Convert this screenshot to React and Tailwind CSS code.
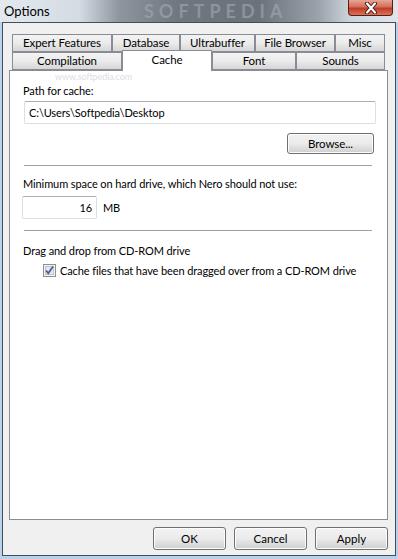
import React from 'react';

const font = { fontFamily: 'Lato, "Noto Sans", sans-serif' };

const Tab = ({ label, w, selected }) => (
  <div
    className={`flex items-center justify-center border border-[#898c95] text-[11.5px] tracking-[-0.1px] text-black ${
      selected
        ? 'relative z-10 h-[21px] -mb-px border-b-0 bg-white pb-[2px]'
        : 'h-[18px] bg-gradient-to-b from-[#f3f3f3] via-[#ebebeb] to-[#d6d6d6]'
    } ${w}`}
  >
    {label}
  </div>
);

const Button = ({ children, w }) => (
  <button
    className={`${w} flex items-center justify-center rounded-[3px] border border-[#707070] bg-gradient-to-b from-[#f2f2f2] via-[#ebebeb] to-[#cfcfcf] text-[11.5px] text-black shadow-[inset_0_0_0_1px_#fcfcfc]`}
  >
    {children}
  </button>
);

const Checkbox = () => (
  <svg width="13" height="13" viewBox="0 0 13 13" className="shrink-0">
    <rect x="0.5" y="0.5" width="12" height="12" fill="#f4f4f4" stroke="#8e8f8f" />
    <rect x="2.5" y="2.5" width="8" height="8" fill="#e3e6ea" stroke="#c0c4cb" />
    <path d="M3 6.5 L5.3 9.2 L10 2.6" fill="none" stroke="#4a5f97" strokeWidth="1.8" />
  </svg>
);

export default function App() {
  return (
    <div className="flex h-[559px] w-[398px] flex-col bg-[#b9d1ea]" style={font}>
      {/* Title bar */}
      <div className="relative h-[22px] bg-[linear-gradient(90deg,#e3e9ef_0%,#d3dbe3_20%,#8d959e_30%,#6e767f_45%,#6a727b_65%,#9aa2ab_80%,#cdd4db_88%,#dfe5ea_100%)]">
        <span className="absolute left-[4px] top-[3px] text-[13px] leading-[16px] text-black">Options</span>
        <span className="absolute left-[144px] top-[1px] text-[18px] font-bold leading-[20px] tracking-[5px] text-[#a4aab1] opacity-60">
          SOFTPEDIA
        </span>
        <div className="absolute right-[5px] top-0 flex h-[16px] w-[45px] items-center justify-center rounded-b-[4px] border border-t-0 border-[#5a1b12] bg-[linear-gradient(180deg,#e7a595_0%,#d2705c_45%,#c33a22_55%,#d8745c_100%)]">
          <svg width="14" height="12" viewBox="0 0 14 12">
            <path d="M3 1.5 L11 10.5 M11 1.5 L3 10.5" stroke="#3b1a14" strokeWidth="4" strokeLinecap="round" />
            <path d="M3 1.5 L11 10.5 M11 1.5 L3 10.5" stroke="#ffffff" strokeWidth="2.2" strokeLinecap="round" />
          </svg>
        </div>
      </div>

      {/* Client area */}
      <div className="mx-[2px] mb-[3px] flex flex-1 flex-col border border-[#434e5b] bg-[#f0f0f0] pl-[6px] pr-[7px] pt-[11px] pb-[5px]">
        {/* Tabs */}
        <div className="flex h-[18px] pl-[3px]">
          <Tab label="Expert Features" w="w-[100px]" />
          <Tab label="Database" w="w-[68px]" />
          <Tab label="Ultrabuffer" w="w-[75px]" />
          <Tab label="File Browser" w="w-[80px]" />
          <Tab label="Misc" w="w-[50px]" />
        </div>
        <div className="flex h-[18px] items-end pl-[3px]">
          <Tab label="Compilation" w="w-[110px]" />
          <Tab label="Cache" w="w-[90px]" selected />
          <Tab label="Font" w="w-[84px]" />
          <Tab label="Sounds" w="w-[89px]" />
        </div>

        {/* Panel */}
        <div className="relative flex flex-1 flex-col border border-[#898c95] bg-white pl-[13px] pt-[12px] text-[11px] leading-[15px] tracking-[-0.1px] text-black">
          <span className="absolute left-[45px] top-[1px] text-[9px] leading-[10px] text-[#dedede]">www.softpedia.com</span>
          <div>Path for cache:</div>
          <div className="ml-px mt-[3px] flex h-[23px] w-[352px] items-center rounded-[2px] border border-[#dbdfe6] border-t-[#abadb3] pl-[4px]">
            C:\Users\Softpedia\Desktop
          </div>
          <div className="mt-[9px] flex justify-start pl-[264px]">
            <Button w="h-[21px] w-[87px]">Browse...</Button>
          </div>
          <div className="ml-px mt-[11px] h-px w-[348px] bg-[#a0a0a0]" />
          <div className="mt-[10px]">Minimum space on hard drive, which Nero should not use:</div>
          <div className="mt-[5px] flex items-center">
            <div className="-ml-px flex h-[23px] w-[75px] items-center justify-end rounded-[2px] border border-[#dbdfe6] border-t-[#abadb3] pr-[4px]">
              16
            </div>
            <span className="ml-[6px]">MB</span>
          </div>
          <div className="ml-px mt-[11px] h-px w-[348px] bg-[#a0a0a0]" />
          <div className="mt-[12px]">Drag and drop from CD-ROM drive</div>
          <div className="mt-[5px] flex h-[15px] items-center gap-[4px] whitespace-nowrap pl-[20px]">
            <Checkbox />
            <span>Cache files that have been dragged over from a CD-ROM drive</span>
          </div>
        </div>

        {/* Buttons */}
        <div className="mt-[7px] flex justify-end gap-[8px]">
          <Button w="h-[23px] w-[73px]">OK</Button>
          <Button w="h-[23px] w-[73px]">Cancel</Button>
          <Button w="h-[23px] w-[73px]">Apply</Button>
        </div>
      </div>
    </div>
  );
}
